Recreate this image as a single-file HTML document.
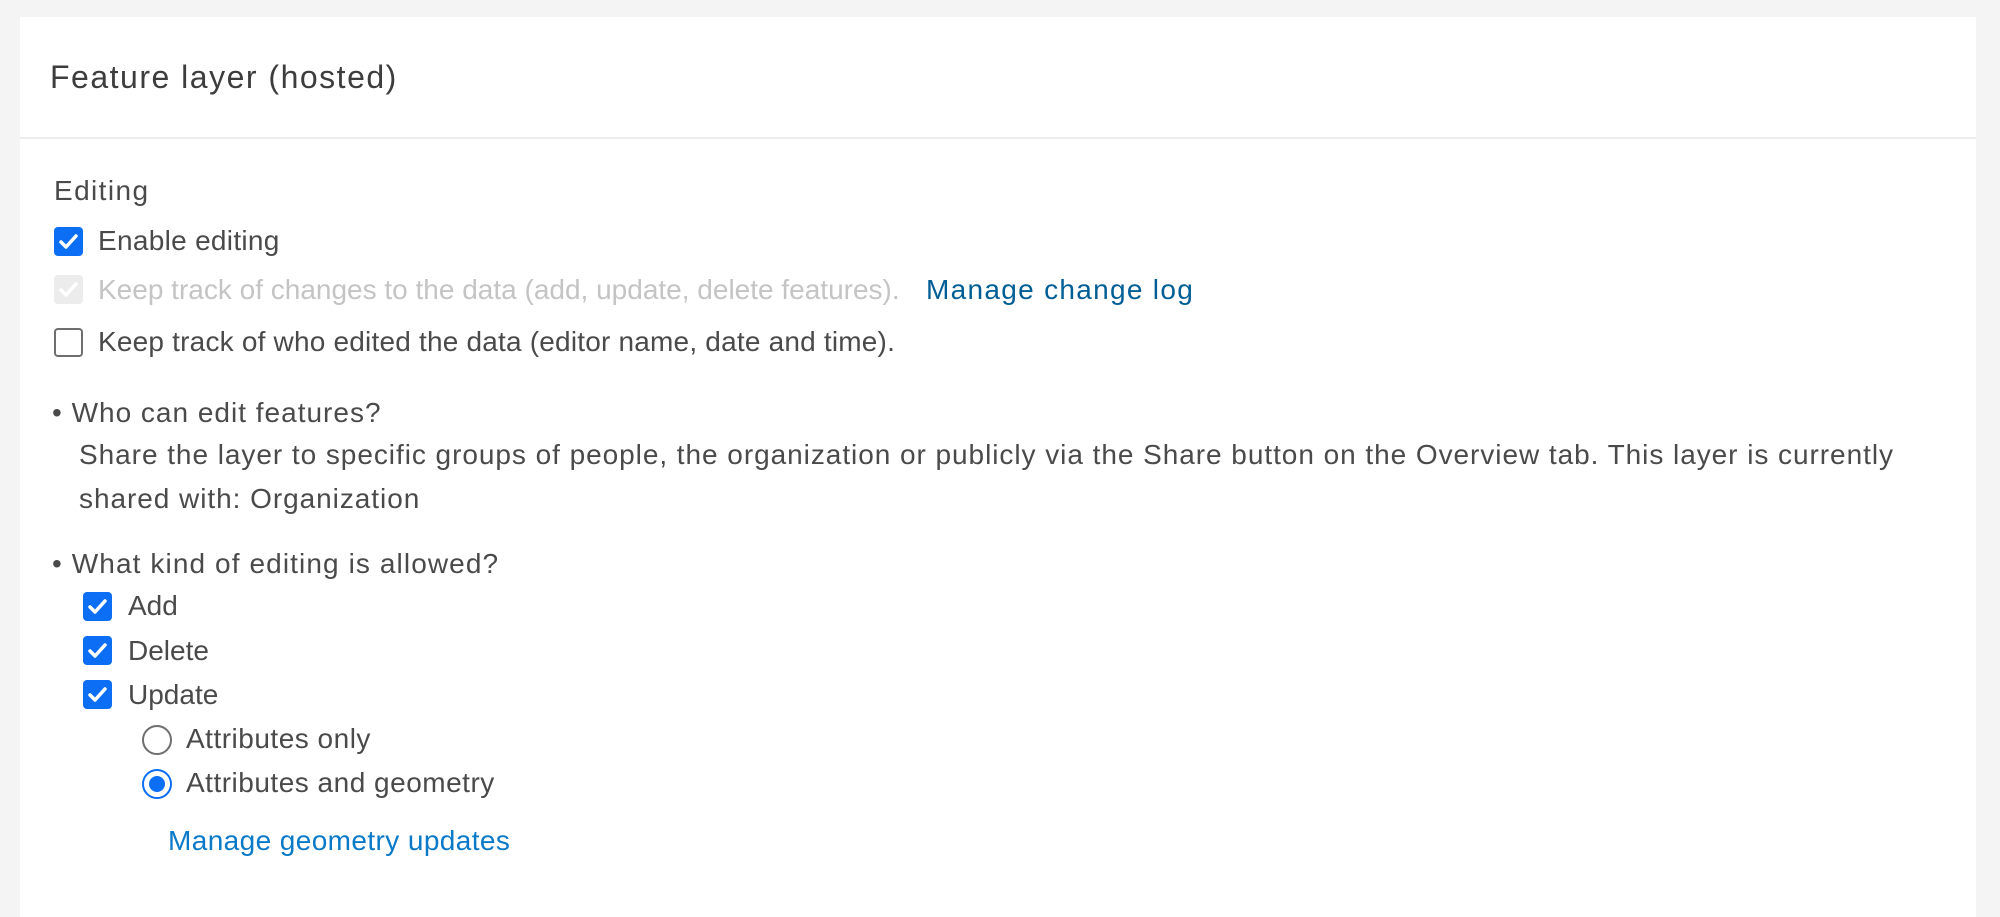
<!DOCTYPE html>
<html><head><meta charset="utf-8"><style>
html,body{margin:0;padding:0;width:2000px;height:875px;overflow:hidden;background:#f4f4f4;font-family:"Liberation Sans",sans-serif;color:#4a4a4a}
.card{position:absolute;left:20px;top:17px;width:1956px;height:900px;background:#fff}
.div{position:absolute;left:20px;top:137px;width:1956px;height:2px;background:#ededed}
.t{position:absolute;white-space:nowrap;font-size:28px;line-height:30px}
.cb{position:absolute;width:29px;height:29px;border-radius:4px;box-sizing:border-box}
.on{background:#0b6ef5}
.dis{background:#ececec}
.off{border:2px solid #6e6e6e;background:#fff}
.cb svg{position:absolute;left:5px;top:6px}
.rd{position:absolute;width:30px;height:30px;border-radius:50%;box-sizing:border-box}
</style></head><body>
<div class="card"></div>
<div class="div"></div>
<div class="t" style="left:50px;top:59px;font-size:32px;line-height:36px;letter-spacing:1.5px;color:#3d3d3d">Feature layer (hosted)</div>
<div class="t" style="left:54px;top:176px;letter-spacing:1.4px">Editing</div>

<div class="cb on" style="left:54px;top:227px"><svg width="19" height="17" viewBox="0 0 19 17"><path d="M2 9l5 5L17 3" fill="none" stroke="#fff" stroke-width="3.5" stroke-linecap="round" stroke-linejoin="round"/></svg></div>
<div class="t" style="left:98px;top:226px;letter-spacing:0.3px">Enable editing</div>

<div class="cb dis" style="left:54px;top:275px"><svg width="19" height="17" viewBox="0 0 19 17"><path d="M2 9l5 5L17 3" fill="none" stroke="#fff" stroke-width="3.5" stroke-linecap="round" stroke-linejoin="round"/></svg></div>
<div class="t" style="left:98px;top:275px;color:#c4c4c4">Keep track of changes to the data (add, update, delete features).</div>
<div class="t" style="left:926px;top:275px;color:#005e95;letter-spacing:1.3px">Manage change log</div>

<div class="cb off" style="left:54px;top:328px"></div>
<div class="t" style="left:98px;top:327px;letter-spacing:0.2px">Keep track of who edited the data (editor name, date and time).</div>

<div class="t" style="left:52px;top:398px;letter-spacing:1px">• Who can edit features?</div>
<div class="t" style="left:79px;top:440px;letter-spacing:0.95px">Share the layer to specific groups of people, the organization or publicly via the Share button on the Overview tab. This layer is currently</div>
<div class="t" style="left:79px;top:484px;letter-spacing:0.95px">shared with: Organization</div>

<div class="t" style="left:52px;top:549px;letter-spacing:1.1px">• What kind of editing is allowed?</div>

<div class="cb on" style="left:83px;top:592px"><svg width="19" height="17" viewBox="0 0 19 17"><path d="M2 9l5 5L17 3" fill="none" stroke="#fff" stroke-width="3.5" stroke-linecap="round" stroke-linejoin="round"/></svg></div>
<div class="t" style="left:128px;top:591px">Add</div>
<div class="cb on" style="left:83px;top:636px"><svg width="19" height="17" viewBox="0 0 19 17"><path d="M2 9l5 5L17 3" fill="none" stroke="#fff" stroke-width="3.5" stroke-linecap="round" stroke-linejoin="round"/></svg></div>
<div class="t" style="left:128px;top:636px">Delete</div>
<div class="cb on" style="left:83px;top:680px"><svg width="19" height="17" viewBox="0 0 19 17"><path d="M2 9l5 5L17 3" fill="none" stroke="#fff" stroke-width="3.5" stroke-linecap="round" stroke-linejoin="round"/></svg></div>
<div class="t" style="left:128px;top:680px">Update</div>

<div class="rd" style="left:142px;top:725px;border:2px solid #6e6e6e"></div>
<div class="t" style="left:186px;top:724px;letter-spacing:0.5px">Attributes only</div>
<div class="rd" style="left:142px;top:769px;border:2px solid #0b6ef5"><div style="position:absolute;left:5px;top:5px;width:16px;height:16px;border-radius:50%;background:#0b6ef5"></div></div>
<div class="t" style="left:186px;top:768px;letter-spacing:0.5px">Attributes and geometry</div>

<div class="t" style="left:168px;top:826px;color:#0a79c8;letter-spacing:0.4px">Manage geometry updates</div>
</body></html>
